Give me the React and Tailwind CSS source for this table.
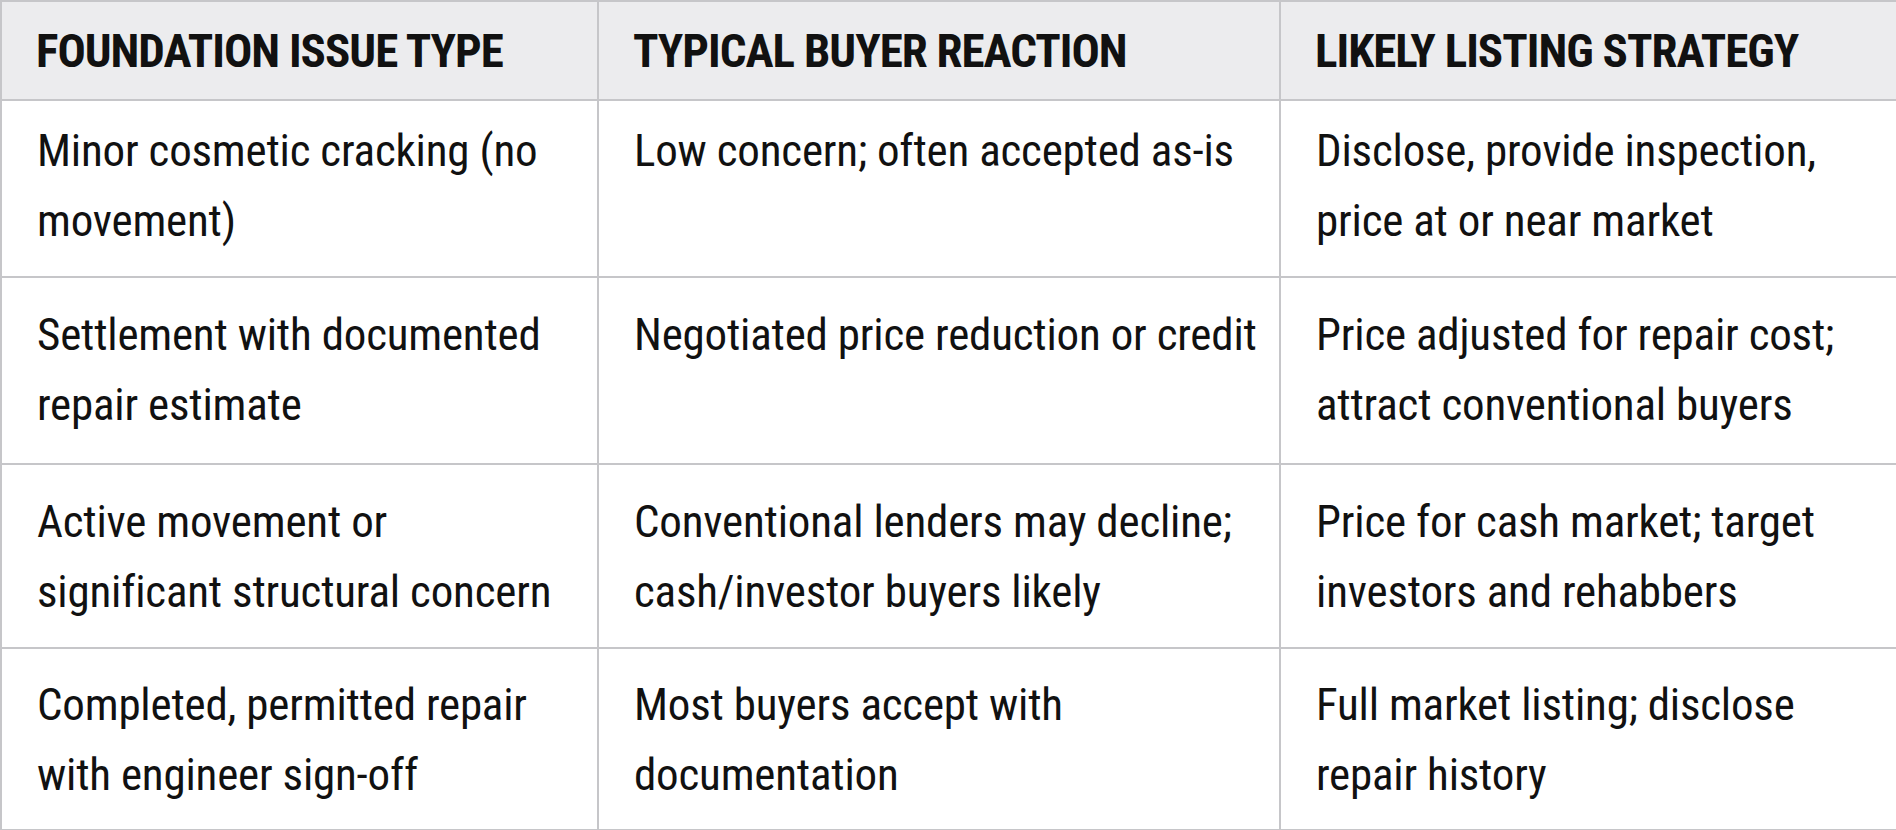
import React from "react";

const headers = [
  "FOUNDATION ISSUE TYPE",
  "TYPICAL BUYER REACTION",
  "LIKELY LISTING STRATEGY",
];

const rows = [
  {
    height: "h-[177px]",
    pad: "pt-[15px]",
    cells: [
      ["Minor cosmetic cracking (no", "movement)"],
      ["Low concern; often accepted as-is"],
      ["Disclose, provide inspection,", "price at or near market"],
    ],
  },
  {
    height: "h-[187px]",
    pad: "pt-[22px]",
    cells: [
      ["Settlement with documented", "repair estimate"],
      ["Negotiated price reduction or credit"],
      ["Price adjusted for repair cost;", "attract conventional buyers"],
    ],
  },
  {
    height: "h-[184px]",
    pad: "pt-[22px]",
    cells: [
      ["Active movement or", "significant structural concern"],
      ["Conventional lenders may decline;", "cash/investor buyers likely"],
      ["Price for cash market; target", "investors and rehabbers"],
    ],
  },
  {
    height: "h-[182px]",
    pad: "pt-[21px]",
    cells: [
      ["Completed, permitted repair", "with engineer sign-off"],
      ["Most buyers accept with", "documentation"],
      ["Full market listing; disclose", "repair history"],
    ],
  },
];

export default function App() {
  return (
    <div className="w-[1896px] h-[830px] bg-white text-[#111] font-['Roboto_Condensed','Liberation_Sans_Narrow',Roboto,sans-serif]">
      <table className="w-[1896px] table-fixed border-collapse">
        <colgroup>
          <col className="w-[597px]" />
          <col className="w-[682px]" />
          <col className="w-[617px]" />
        </colgroup>
        <thead>
          <tr className="h-[99px] bg-[#ececee]">
            {headers.map((h) => (
              <th
                key={h}
                className="border-2 border-[#c6c6c9] pl-[34px] text-left align-middle text-[47px] font-bold tracking-[-1px] leading-none whitespace-nowrap"
              >
                {h}
              </th>
            ))}
          </tr>
        </thead>
        <tbody>
          {rows.map((row, i) => (
            <tr key={i} className={row.height}>
              {row.cells.map((lines, j) => (
                <td
                  key={j}
                  className={`border-2 border-[#c6c6c9] pl-[35px] align-top text-[45px] tracking-[-0.2px] leading-[70px] ${row.pad}`}
                >
                  {lines.map((l) => (
                    <div key={l} className="whitespace-nowrap">
                      {l}
                    </div>
                  ))}
                </td>
              ))}
            </tr>
          ))}
        </tbody>
      </table>
    </div>
  );
}
